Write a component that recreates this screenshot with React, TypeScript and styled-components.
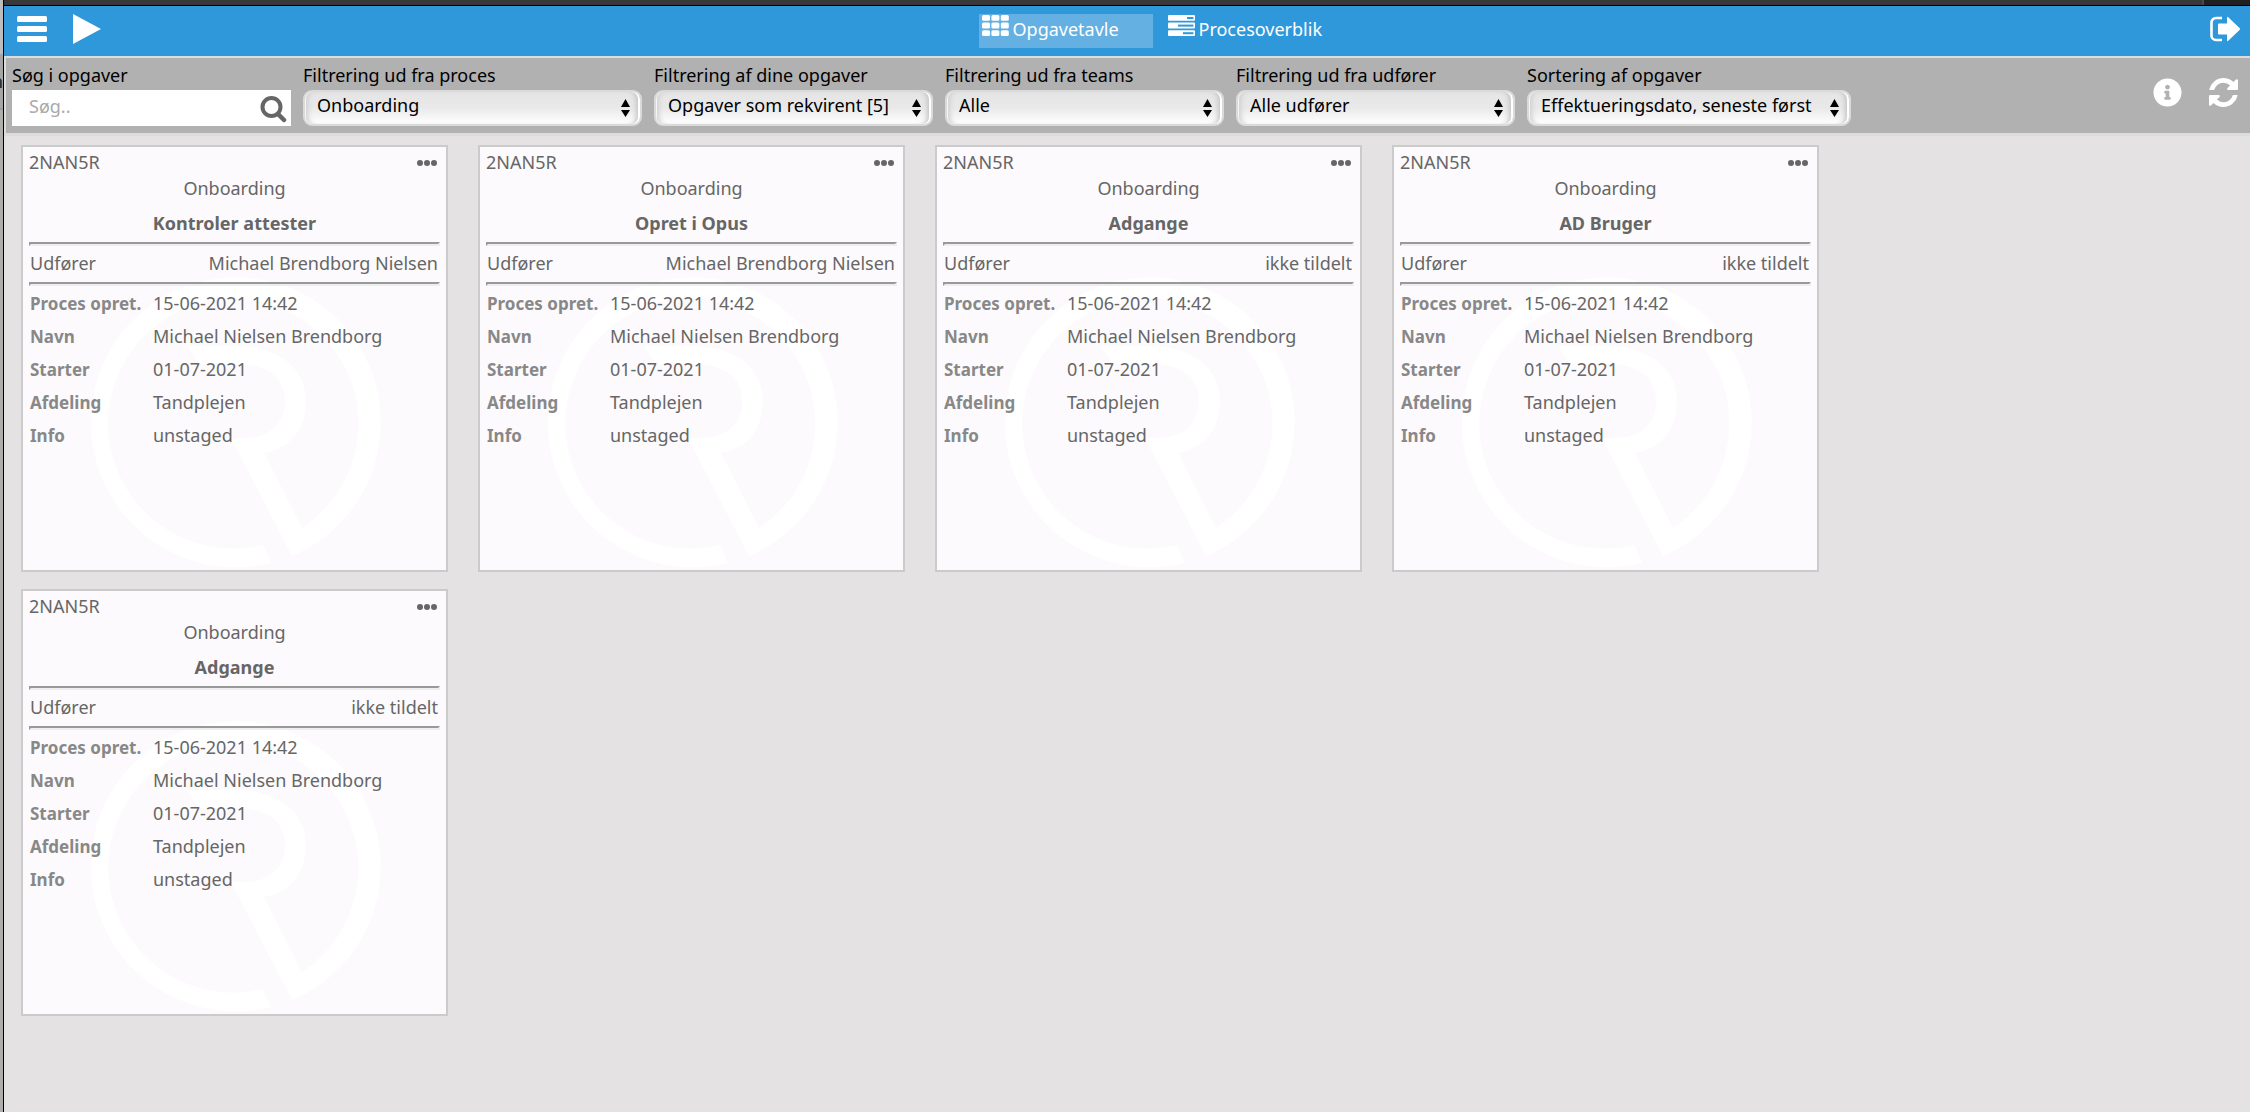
import React from "react";
import styled, { createGlobalStyle } from "styled-components";
import { FaInfoCircle } from "react-icons/fa";

const GlobalStyle = createGlobalStyle`
  *, *::before, *::after { box-sizing: border-box; }
  body {
    margin: 0;
    background: #e4e2e3;
    color: #666;
    font: 18px/24px "Noto Sans", "Open Sans", sans-serif;
  }
  button, input, select { font: inherit; color: inherit; }
`;

const Window = styled.div`
  display: flex;
  min-height: 100vh;
`;

const BackgroundWindow = styled.aside`
  display: flex;
  justify-content: flex-end;
  flex: none;
  width: 4px;
  padding-top: 69px;
  overflow: hidden;
  border-right: 1px solid #000;
  background: linear-gradient(#bdbdbd 54px, #a6a6a6 54px 108px, #9c9c9c 108px 110px, #aeaeab 110px);
  color: #333;
  font-weight: 700;
`;

const Page = styled.div`
  flex: 1;
  min-width: 0;
`;

const WindowEdge = styled.div`
  display: flex;
  justify-content: flex-end;
  height: 6px;
  border-bottom: 1px solid #000;
  background: #373837;
`;

const WindowCorner = styled.div`
  width: 48px;
  border-left: 2px solid #4a4a4a;
  background: #1f201f;
`;

const Header = styled.header`
  display: flex;
  align-items: flex-start;
  height: 50px;
  padding: 8px 10px 0 13px;
  background: #2f98da;
  color: #fff;
`;

const HeaderGroup = styled.div<{ $width?: number }>`
  display: flex;
  align-items: center;
  gap: 26px;
  height: 30px;
  width: ${(p) => (p.$width ? `${p.$width}px` : "auto")};
`;

const IconButton = styled.button`
  display: flex;
  padding: 0;
  border: 0;
  background: none;
  color: inherit;
  cursor: pointer;
`;

const Tabs = styled.nav`
  display: flex;
  flex: 1;
  justify-content: center;
  gap: 12px;
`;

const Tab = styled.a<{ $active?: boolean }>`
  display: flex;
  align-items: flex-start;
  gap: 4px;
  width: 174px;
  height: 34px;
  padding: 1px 3px;
  background: ${(p) => (p.$active ? "#64b0e2" : "transparent")};
  color: #fff;
  line-height: 28px;
  text-decoration: none;
`;

const Toolbar = styled.section`
  display: flex;
  align-items: center;
  justify-content: space-between;
  padding: 5px 12px 7px 6px;
  border: solid #dcdcdc;
  border-width: 2px 0 3px 2px;
  background: #b1b1b1;
  color: #000;
`;

const Filters = styled.div`
  display: flex;
  gap: 12px;
`;

const Field = styled.div<{ $width: number }>`
  display: flex;
  flex-direction: column;
  gap: 3px;
  width: ${(p) => p.$width}px;
`;

const Control = styled.div`
  position: relative;
  height: 36px;
`;

const SearchInput = styled.input`
  width: 100%;
  height: 100%;
  padding: 0 40px 4px 17px;
  border: 0;
  background: #fff;
  &::placeholder { color: #aaa; opacity: 1; }
`;

const SearchButton = styled(IconButton)`
  position: absolute;
  top: 6px;
  right: 4px;
  color: #666;
`;

const Select = styled.select`
  width: 100%;
  height: 100%;
  padding: 0 30px 6px 12px;
  appearance: none;
  border: 2px solid #dadada;
  border-radius: 9px;
  background: linear-gradient(#e5e5e5, #e9e9e9 50%, #fff);
  box-shadow:
    inset -2px 0 0 #fff,
    inset 1px 0 0 #f6f6f6,
    inset -7px 0 5px -3px #c4c4c4,
    inset 6px 0 5px -3px #cfcfcf;
`;

const Arrows = styled.svg`
  position: absolute;
  top: 9px;
  right: 12px;
  pointer-events: none;
`;

const ToolbarActions = styled.div`
  display: flex;
  gap: 27px;
  color: #fff;
  padding-bottom: 4px;
`;

const Board = styled.main`
  display: flex;
  flex-wrap: wrap;
  gap: 17px 30px;
  padding: 9px 17px;
`;

const Card = styled.article`
  position: relative;
  width: 427px;
  height: 427px;
  padding: 3px 6px;
  border: 2px solid #cbcbcb;
  background: #fcfafc;
`;

const Watermark = styled.svg`
  position: absolute;
  inset: 0;
  fill: #fff;
`;

const CardBody = styled.div`
  position: relative;
`;

const CardTop = styled.div`
  display: flex;
  align-items: center;
  justify-content: space-between;
  padding-right: 3px;
`;

const ProcessName = styled.div`
  margin-top: 2px;
  text-align: center;
`;

const TaskTitle = styled.h2`
  margin: 11px 0 7px;
  font-size: 18px;
  line-height: 24px;
  text-align: center;
`;

const Rule = styled.hr`
  height: 4px;
  margin: 0;
  border: solid;
  border-width: 2px;
  border-color: #999 #eee #eee #999;
`;

const Assignee = styled.div`
  display: flex;
  justify-content: space-between;
  padding: 5px 2px 7px 1px;
`;

const Details = styled.table`
  width: 100%;
  margin-top: 1px;
  border-collapse: collapse;
  line-height: 33px;
  text-align: left;
  th {
    width: 124px;
    padding: 0 0 0 1px;
    color: #888;
    font-size: 17px;
  }
  td { padding: 0; }
`;

const MenuIcon = () => (
  <svg width="30" height="28" viewBox="0 0 30 28" fill="currentColor" aria-hidden="true">
    <rect x="0" y="1" width="30" height="6" rx="1.5" />
    <rect x="0" y="11" width="30" height="6" rx="1.5" />
    <rect x="0" y="21" width="30" height="6" rx="1.5" />
  </svg>
);

const PlayIcon = () => (
  <svg width="28" height="30" viewBox="0 0 28 30" fill="currentColor" aria-hidden="true">
    <path d="M0 0 28 15 0 30Z" />
  </svg>
);

const GridIcon = () => (
  <svg width="27" height="21" viewBox="0 0 27 21" fill="currentColor" aria-hidden="true">
    {[0, 7.6, 15.2].map((y) =>
      [0, 9.4, 18.8].map((x) => <rect key={`${x}-${y}`} x={x} y={y} width="8" height="5.8" rx="1.5" />)
    )}
  </svg>
);

const ListIcon = () => (
  <svg width="27" height="21" viewBox="0 0 27 21" aria-hidden="true">
    {[
      [0, 19],
      [7.6, 10],
      [15.2, 15],
    ].map(([y, x]) => (
      <g key={y}>
        <rect y={y} width="27" height="5.8" rx="1" fill="#fff" />
        <rect x={x} y={y + 2} width={25.4 - x} height="2" fill="#2f98da" />
      </g>
    ))}
  </svg>
);

const SignOutIcon = () => (
  <svg width="30" height="26" viewBox="0 0 30 26" fill="currentColor" aria-hidden="true">
    <path d="M12 2H6a4.500 4.500 0 0 0-4.500 4.500v13A4.500 4.500 0 0 0 6 24h6" fill="none" stroke="currentColor" strokeWidth="2.600" />
    <path d="M8 8.500q0-1 1-1h8V2q0-2 1.500-.6L29.500 12q1 1 0 2L18.500 24.600Q17 26 17 24v-5.500H9q-1 0-1-1Z" />
  </svg>
);

const SearchIcon = () => (
  <svg width="27" height="27" viewBox="0 0 27 27" fill="none" stroke="currentColor" aria-hidden="true">
    <circle cx="11.500" cy="11" r="9" strokeWidth="4" />
    <path d="m18 18 6 6" strokeWidth="4.500" strokeLinecap="round" />
  </svg>
);

const RefreshIcon = () => (
  <svg width="29" height="29" viewBox="0 0 1536 1536" fill="currentColor" aria-hidden="true">
    <path d="M1511 928q0 5-1 7-64 268-268 434.500T764 1536q-146 0-282.500-55T238 1324l-129 129q-19 19-45 19t-45-19-19-45V960q0-26 19-45t45-19h448q26 0 45 19t19 45-19 45l-137 137q71 66 161 102t187 36q134 0 250-65t186-179q11-17 53-117 8-23 30-23h192q13 0 22.500 9.500t9.500 22.500zm25-800v448q0 26-19 45t-45 19h-448q-26 0-45-19t-19-45 19-45l138-138Q969 256 768 256q-134 0-250 65T332 500q-11 17-53 117-8 23-30 23H50q-13 0-22.500-9.500T18 608v-7q65-268 270-434.500T768 0q146 0 284 55.500T1297 212l130-129q19-19 45-19t45 19 19 45z" />
  </svg>
);

const DotsIcon = () => (
  <svg width="20" height="7" viewBox="0 0 20 7" fill="currentColor" aria-hidden="true">
    <circle cx="3" cy="4" r="3" />
    <circle cx="10" cy="4" r="3" />
    <circle cx="17" cy="4" r="3" />
  </svg>
);

const CardLogo = () => (
  <Watermark viewBox="1 0 423 423" aria-hidden="true">
    <path d="M270 409A145 145 0 1 0 249 416L241 398A125 125 0 1 1 280 381L242 306C269 301 284 282 284 254C284 220 254 199 214 199H165L177 217H214C245 217 263 230 263 254C263 277 247 291 222 291H209Z" />
  </Watermark>
);

const filters = [
  { id: "process", label: "Filtrering ud fra proces", value: "Onboarding", width: 339 },
  { id: "mine", label: "Filtrering af dine opgaver", value: "Opgaver som rekvirent [5]", width: 279 },
  { id: "teams", label: "Filtrering ud fra teams", value: "Alle", width: 279 },
  { id: "assignee", label: "Filtrering ud fra udfører", value: "Alle udfører", width: 279 },
  { id: "sorting", label: "Sortering af opgaver", value: "Effektueringsdato, seneste først", width: 324 },
];

const tasks = [
  { title: "Kontroler attester", assignee: "Michael Brendborg Nielsen" },
  { title: "Opret i Opus", assignee: "Michael Brendborg Nielsen" },
  { title: "Adgange", assignee: "ikke tildelt" },
  { title: "AD Bruger", assignee: "ikke tildelt" },
  { title: "Adgange", assignee: "ikke tildelt" },
];

const details = [
  ["Proces opret.", "15-06-2021 14:42"],
  ["Navn", "Michael Nielsen Brendborg"],
  ["Starter", "01-07-2021"],
  ["Afdeling", "Tandplejen"],
  ["Info", "unstaged"],
];

export default function App() {
  return (
    <>
      <GlobalStyle />
      <Window>
        <BackgroundWindow aria-hidden="true">a</BackgroundWindow>
        <Page>
          <WindowEdge>
            <WindowCorner />
          </WindowEdge>
          <Header>
            <HeaderGroup $width={90}>
              <IconButton aria-label="Menu"><MenuIcon /></IconButton>
              <IconButton aria-label="Start proces"><PlayIcon /></IconButton>
            </HeaderGroup>
            <Tabs>
              <Tab href="#opgavetavle" $active><GridIcon />Opgavetavle</Tab>
              <Tab href="#procesoverblik"><ListIcon />Procesoverblik</Tab>
            </Tabs>
            <HeaderGroup>
              <IconButton aria-label="Log ud"><SignOutIcon /></IconButton>
            </HeaderGroup>
          </Header>
          <Toolbar>
            <Filters>
              <Field $width={279}>
                <label htmlFor="search">Søg i opgaver</label>
                <Control>
                  <SearchInput id="search" type="text" placeholder="Søg.." />
                  <SearchButton aria-label="Søg"><SearchIcon /></SearchButton>
                </Control>
              </Field>
              {filters.map((f) => (
                <Field key={f.id} $width={f.width}>
                  <label htmlFor={f.id}>{f.label}</label>
                  <Control>
                    <Select id={f.id} defaultValue={f.value}>
                      <option>{f.value}</option>
                    </Select>
                    <Arrows width="9" height="18" viewBox="0 0 9 18" aria-hidden="true">
                      <path d="M4.500 0 9 8H0ZM4.500 18 0 11h9Z" />
                    </Arrows>
                  </Control>
                </Field>
              ))}
            </Filters>
            <ToolbarActions>
              <IconButton aria-label="Information"><FaInfoCircle size={29} /></IconButton>
              <IconButton aria-label="Opdater"><RefreshIcon /></IconButton>
            </ToolbarActions>
          </Toolbar>
          <Board>
            {tasks.map((task, i) => (
              <Card key={i}>
                <CardLogo />
                <CardBody>
                  <CardTop>
                    <span>2NAN5R</span>
                    <IconButton aria-label="Flere valg"><DotsIcon /></IconButton>
                  </CardTop>
                  <ProcessName>Onboarding</ProcessName>
                  <TaskTitle>{task.title}</TaskTitle>
                  <Rule />
                  <Assignee>
                    <span>Udfører</span>
                    <span>{task.assignee}</span>
                  </Assignee>
                  <Rule />
                  <Details>
                    <tbody>
                      {details.map(([name, value]) => (
                        <tr key={name}>
                          <th scope="row">{name}</th>
                          <td>{value}</td>
                        </tr>
                      ))}
                    </tbody>
                  </Details>
                </CardBody>
              </Card>
            ))}
          </Board>
        </Page>
      </Window>
    </>
  );
}
